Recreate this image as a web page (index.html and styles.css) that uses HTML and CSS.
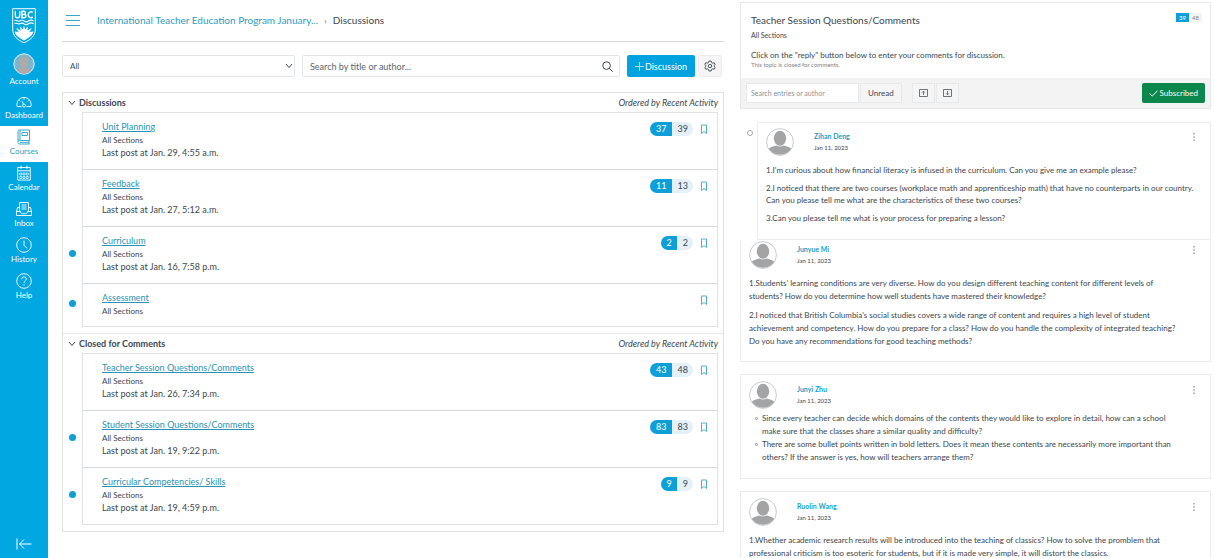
FILE: index.html
```html
<!DOCTYPE html>
<html lang="en">
<head>
    <meta charset="UTF-8">
    <meta name="viewport" content="width=device-width, initial-scale=1.0">
    <title>Discussions</title>
    <link rel="stylesheet" href="styles.css">
</head>
<body>
    <svg class="defs" aria-hidden="true">
        <symbol id="person" viewBox="0 0 28 28">
            <circle cx="14" cy="14" r="13.4" fill="#fff" stroke="#c9cbcc"/>
            <path d="M2.800 20.800c1.600-2.200 5-2.600 7.800-3.400 2.200 1.300 4.600 1.300 6.800 0 2.800.8 6.200 1.200 7.800 3.400-4.600 7.800-17.800 7.800-22.400 0z" fill="#a3a4a5"/>
            <ellipse cx="14" cy="10.200" rx="6.200" ry="7.500" fill="#a3a4a5"/>
        </symbol>
        <symbol id="bookmark" viewBox="0 0 8 11">
            <path d="M1.500 1h5v8.500l-2.500-2-2.500 2z" fill="none" stroke="#4fb3c4"/>
        </symbol>
        <symbol id="chevron" viewBox="0 0 8 6">
            <path d="M1 1l3 3.500L7 1" fill="none" stroke="#3b464f"/>
        </symbol>
        <symbol id="dots" viewBox="0 0 4 10">
            <path d="M1.200 1h1.600v1.600H1.200zM1.200 4.200h1.600v1.600H1.200zM1.200 7.400h1.600V9H1.200z" fill="#a0a6ab"/>
        </symbol>
    </svg>

    <div class="layout">
        <nav class="sidebar" aria-label="Global">
            <a href="#" class="logo" aria-label="UBC">
                <svg width="24" height="36" viewBox="0 0 24 36" fill="none" stroke="#fff">
                    <path d="M.7.7h22.600v20.500c0 6.500-4.300 10.500-11.300 13.600C5 31.700.7 27.700.7 21.200z"/>
                    <path d="M3.300 3.300v4.200c0 3 4.400 3 4.400 0V3.300M10 3.300v6.500h2c2.600 0 2.600-3.300.3-3.300H10h1.800c2.300 0 2.200-3.200-.2-3.200zM20.800 4.300c-4.700-2.500-6.500 5.200-1.900 5.500.8 0 1.300-.2 1.900-.6" stroke-width="1.400"/>
                    <path d="M2.500 12.800c2-1.500 3 1.200 5 .2s3-1.300 4.500 0 3 1 4.500 0 3-1.500 5 0M2.500 15.600c2-1.500 3 1.200 5 .2s3-1.300 4.500 0 3 1 4.500 0 3-1.500 5 0" stroke-width="1.100"/>
                    <path d="M12 17.500l1.200 4 2.600-3.300-.3 4.200 4.400-2.600-2.500 4.200 4-.4c-.8 4-4.500 6.500-9.400 9-4.900-2.500-8.600-5-9.400-9l4 .4-2.500-4.200 4.400 2.600-.3-4.200 2.600 3.300z" fill="#fff" stroke="none"/>
                </svg>
            </a>
            <a href="#" class="nav-item nav-account">
                <svg width="22" height="22" viewBox="0 0 22 22"><circle cx="11" cy="11" r="10.200" fill="#7fb4c9" stroke="#d9f1fa"/><path d="M4 17.500c1.500-2 3.500-1.800 5-2.800-3.200-3-2.700-11 2-11s5.200 8 2 11c1.500 1 3.500.8 5 2.800-3.500 4.200-10.500 4.200-14 0z" fill="#b0a9a5"/></svg>
                <span>Account</span>
            </a>
            <a href="#" class="nav-item">
                <svg width="16" height="16" viewBox="0 0 16 16" fill="none" stroke="#fff" stroke-width=".9"><path d="M5.500 13.500H1C.2 8.500 3.200 4.500 8 4.500s7.800 4 7 9h-4.500M8 4.500v2M3.200 7l1.200 1.200M12.800 7l-1.200 1.200M6.200 8.200l1.300 3.200"/><circle cx="8" cy="12.600" r="1.500"/></svg>
                <span>Dashboard</span>
            </a>
            <a href="#" class="nav-item active">
                <svg width="14" height="16" viewBox="0 0 14 16" fill="none" stroke="#25a0c6" stroke-width=".9"><path d="M12.500 11.500h-10c-1 0-1.500-.5-1.500-1.300V2.500C1 1.500 1.500 1 2.500 1h10zM1.100 10.500v3c0 1 .5 1.500 1.400 1.500h10M12 11.500V15M3 1v10M5 3.500h5.500v3H5zM3 13.300h9"/></svg>
                <span>Courses</span>
            </a>
            <a href="#" class="nav-item">
                <svg width="14" height="16" viewBox="0 0 14 16" fill="none" stroke="#fff" stroke-width=".9"><path d="M.7 2.500h12.600v12.600H.7zM.7 5.800h12.600M4 .5v3.500M10 .5v3.500"/><path d="M2.800 8h2v2h-2zM6 8h2v2H6zM9.200 8h2v2h-2zM2.800 11.500h2v2h-2zM6 11.500h2v2H6zM9.200 11.500h2v2h-2z" stroke-width=".7"/></svg>
                <span>Calendar</span>
            </a>
            <a href="#" class="nav-item">
                <svg width="16" height="16" viewBox="0 0 16 16" fill="none" stroke="#fff" stroke-width=".9"><path d="M3.500 10V1.500h9V10M5.500 4h5M5.500 6h5M5.500 8h5M3.500 6.500h-2l-1 4v4h15v-4l-1-4h-2M.5 10.500h4.200c0 2 1 2.200 3.300 2.200s3.300-.2 3.300-2.200h4.200"/></svg>
                <span>Inbox</span>
            </a>
            <a href="#" class="nav-item">
                <svg width="16" height="16" viewBox="0 0 16 16" fill="none" stroke="#fff" stroke-width=".9"><circle cx="8" cy="8" r="7.300"/><path d="M8 3.500V8.300l3 3"/></svg>
                <span>History</span>
            </a>
            <a href="#" class="nav-item">
                <svg width="16" height="16" viewBox="0 0 16 16" fill="none" stroke="#fff" stroke-width=".9"><circle cx="8" cy="8" r="7.300"/><path d="M5.700 6.200c0-3.200 4.600-3.200 4.600-.2 0 1.900-2.300 1.700-2.300 3.900M8 11v1.400"/></svg>
                <span>Help</span>
            </a>
            <button class="collapse" aria-label="Minimize navigation">
                <svg width="16" height="12" viewBox="0 0 16 12" fill="none" stroke="#fff"><path d="M1 .5v11M15.500 6H3.500M8 1.500L3.500 6 8 10.500"/></svg>
            </button>
        </nav>

        <main class="discussions">
            <header class="crumbs">
                <button class="menu" aria-label="Course menu">
                    <svg width="14" height="12" viewBox="0 0 14 12" stroke="#36a6cb"><path d="M0 1.500h14M0 6.500h14M0 11.500h14"/></svg>
                </button>
                <a href="#">International Teacher Education Program January...</a>
                <span class="sep">›</span>
                <span>Discussions</span>
            </header>

            <div class="filters">
                <div class="select-wrap">
                    <select class="field" aria-label="Filter"><option>All</option></select>
                    <svg width="8" height="6"><use href="#chevron"/></svg>
                </div>
                <div class="search-wrap">
                    <input class="field" type="text" aria-label="Search discussions" placeholder="Search by title or author...">
                    <svg width="11" height="11" viewBox="0 0 11 11" fill="none" stroke="#3b464f"><circle cx="4.600" cy="4.600" r="3.800"/><path d="M7.400 7.400l3.200 3.200"/></svg>
                </div>
                <button class="btn-add"><svg width="9" height="9" viewBox="0 0 9 9" stroke="#a9dff4"><path d="M4.500 0v9M0 4.500h9"/></svg>Discussion</button>
                <button class="btn-settings" aria-label="Settings">
                    <svg width="12" height="12" viewBox="0 0 12 12" fill="none" stroke="#3b464f" stroke-width=".9"><path d="M4.900 1h2.200l.4 1.600 1.200.6 1.500-.5 1 1.800L10 5.600v.8l1.200 1.100-1 1.800-1.500-.5-1.200.6L7.100 11H4.900l-.4-1.600-1.200-.6-1.500.5-1-1.800L2 6.400v-.8L.8 4.500l1-1.800 1.500.5 1.200-.6z"/><circle cx="6" cy="6" r="1.700"/></svg>
                </button>
            </div>

            <div class="board">
                <section class="group">
                    <div class="group-head">
                        <svg width="8" height="6"><use href="#chevron"/></svg>
                        <h2>Discussions</h2>
                        <em>Ordered by Recent Activity</em>
                    </div>
                    <ul class="topics">
                        <li class="topic">
                            <div class="topic-text">
                                <a href="#">Unit Planning</a>
                                <small>All Sections</small>
                                <p>Last post at Jan. 29, 4:55 a.m.</p>
                            </div>
                            <div class="pill"><b>37</b><span>39</span></div>
                            <svg class="mark" width="8" height="11"><use href="#bookmark"/></svg>
                        </li>
                        <li class="topic">
                            <div class="topic-text">
                                <a href="#">Feedback</a>
                                <small>All Sections</small>
                                <p>Last post at Jan. 27, 5:12 a.m.</p>
                            </div>
                            <div class="pill"><b>11</b><span>13</span></div>
                            <svg class="mark" width="8" height="11"><use href="#bookmark"/></svg>
                        </li>
                        <li class="topic unread">
                            <div class="topic-text">
                                <a href="#">Curriculum</a>
                                <small>All Sections</small>
                                <p>Last post at Jan. 16, 7:58 p.m.</p>
                            </div>
                            <div class="pill"><b>2</b><span>2</span></div>
                            <svg class="mark" width="8" height="11"><use href="#bookmark"/></svg>
                        </li>
                        <li class="topic unread">
                            <div class="topic-text">
                                <a href="#">Assessment</a>
                                <small>All Sections</small>
                            </div>
                            <svg class="mark" width="8" height="11"><use href="#bookmark"/></svg>
                        </li>
                    </ul>
                </section>
                <section class="group">
                    <div class="group-head">
                        <svg width="8" height="6"><use href="#chevron"/></svg>
                        <h2>Closed for Comments</h2>
                        <em>Ordered by Recent Activity</em>
                    </div>
                    <ul class="topics">
                        <li class="topic">
                            <div class="topic-text">
                                <a href="#">Teacher Session Questions/Comments</a>
                                <small>All Sections</small>
                                <p>Last post at Jan. 26, 7:34 p.m.</p>
                            </div>
                            <div class="pill"><b>43</b><span>48</span></div>
                            <svg class="mark" width="8" height="11"><use href="#bookmark"/></svg>
                        </li>
                        <li class="topic unread">
                            <div class="topic-text">
                                <a href="#">Student Session Questions/Comments</a>
                                <small>All Sections</small>
                                <p>Last post at Jan. 19, 9:22 p.m.</p>
                            </div>
                            <div class="pill"><b>83</b><span>83</span></div>
                            <svg class="mark" width="8" height="11"><use href="#bookmark"/></svg>
                        </li>
                        <li class="topic unread">
                            <div class="topic-text">
                                <a href="#">Curricular Competencies/ Skills</a>
                                <small>All Sections</small>
                                <p>Last post at Jan. 19, 4:59 p.m.</p>
                            </div>
                            <div class="pill"><b>9</b><span>9</span></div>
                            <svg class="mark" width="8" height="11"><use href="#bookmark"/></svg>
                        </li>
                    </ul>
                </section>
            </div>
        </main>

        <aside class="thread">
            <div class="thread-card">
                <div class="thread-intro">
                    <div class="thread-title">
                        <h1>Teacher Session Questions/Comments</h1>
                        <div class="count"><b>39</b><span>48</span></div>
                    </div>
                    <p class="sections">All Sections</p>
                    <p class="prompt">Click on the "reply" button below to enter your comments for discussion.</p>
                    <p class="closed">This topic is closed for comments.</p>
                </div>
                <div class="toolbar">
                    <input class="entry-search" type="text" aria-label="Search entries" placeholder="Search entries or author">
                    <button class="tool">Unread</button>
                    <div class="tool-pair">
                        <button class="tool tool-icon" aria-label="Collapse replies"><svg width="9" height="8" viewBox="0 0 9 8" fill="none" stroke="#4b555c" stroke-width=".8"><path d="M.5.5h8v7h-8zM4.500 6V2.200M3 3.700l1.500-1.500L6 3.700"/></svg></button>
                        <button class="tool tool-icon" aria-label="Expand replies"><svg width="9" height="8" viewBox="0 0 9 8" fill="none" stroke="#4b555c" stroke-width=".8"><path d="M.5.5h8v7h-8zM4.500 2v3.800M3 4.300l1.500 1.500L6 4.300"/></svg></button>
                    </div>
                    <button class="subscribed"><svg width="9" height="7" viewBox="0 0 9 7" fill="none" stroke="#fff"><path d="M.5 3.500L3.200 6 8.500.8"/></svg>Subscribed</button>
                </div>
            </div>

            <div class="first-entry">
                <span class="read-dot"></span>
                <article class="entry">
                    <div class="entry-head">
                        <svg width="28" height="28"><use href="#person"/></svg>
                        <div><a href="#">Zihan Deng</a><time>Jan 11, 2023</time></div>
                        <button class="more" aria-label="Options"><svg width="4" height="10"><use href="#dots"/></svg></button>
                    </div>
                    <p>1.I'm curious about how financial literacy is infused in the curriculum. Can you give me an example please?</p>
                    <p>2.I noticed that there are two courses (workplace math and apprenticeship math) that have no counterparts in our country. Can you please tell me what are the characteristics of these two courses?</p>
                    <p>3.Can you please tell me what is your process for preparing a lesson?</p>
                </article>
            </div>

            <article class="entry joined">
                <div class="entry-head">
                    <svg width="28" height="28"><use href="#person"/></svg>
                    <div><a href="#">Junyue Mi</a><time>Jan 11, 2023</time></div>
                    <button class="more" aria-label="Options"><svg width="4" height="10"><use href="#dots"/></svg></button>
                </div>
                <p>1.Students' learning conditions are very diverse. How do you design different teaching content for different levels of students? How do you determine how well students have mastered their knowledge?</p>
                <p>2.I noticed that British Columbia's social studies covers a wide range of content and requires a high level of student achievement and competency. How do you prepare for a class? How do you handle the complexity of integrated teaching? Do you have any recommendations for good teaching methods?</p>
            </article>

            <article class="entry">
                <div class="entry-head">
                    <svg width="28" height="28"><use href="#person"/></svg>
                    <div><a href="#">Junyi Zhu</a><time>Jan 11, 2023</time></div>
                    <button class="more" aria-label="Options"><svg width="4" height="10"><use href="#dots"/></svg></button>
                </div>
                <ul>
                    <li>Since every teacher can decide which domains of the contents they would like to explore in detail, how can a school make sure that the classes share a similar quality and difficulty?</li>
                    <li>There are some bullet points written in bold letters. Does it mean these contents are necessarily more important than others? If the answer is yes, how will teachers arrange them?</li>
                </ul>
            </article>

            <article class="entry">
                <div class="entry-head">
                    <svg width="28" height="28"><use href="#person"/></svg>
                    <div><a href="#">Ruolin Wang</a><time>Jan 11, 2023</time></div>
                    <button class="more" aria-label="Options"><svg width="4" height="10"><use href="#dots"/></svg></button>
                </div>
                <p>1.Whether academic research results will be introduced into the teaching of classics? How to solve the promblem that professional criticism is too esoteric for students, but if it is made very simple, it will distort the classics.</p>
            </article>
        </aside>
    </div>
</body>
</html>
```

FILE: styles.css
```css
* {
    margin: 0;
    padding: 0;
    box-sizing: border-box;
}

body {
    font-family: Lato, "Open Sans", sans-serif;
    font-size: 9px;
    color: #3b464f;
    background: #fff;
}

button,
input,
select {
    font: inherit;
    color: inherit;
    border: none;
    background: none;
}

button {
    cursor: pointer;
}

ul {
    list-style: none;
}

svg {
    display: block;
    flex-shrink: 0;
}

.defs {
    display: none;
}

.layout {
    display: grid;
    grid-template-columns: 48px minmax(0, 690fr) minmax(0, 476fr);
    height: 100vh;
    overflow: hidden;
}

/* Global navigation */
.sidebar {
    display: flex;
    flex-direction: column;
    background: #00a7e1;
}

.logo {
    display: flex;
    justify-content: center;
    padding-top: 8px;
}

.nav-item {
    display: flex;
    flex-direction: column;
    align-items: center;
    justify-content: flex-end;
    height: 36px;
    padding-bottom: 5px;
    color: #fff;
    font-size: 8px;
    line-height: 12px;
    text-decoration: none;
}

.nav-account {
    height: 46px;
    padding-bottom: 3px;
}

.nav-item.active {
    background: #fff;
    color: #25a0c6;
}

.collapse {
    margin-top: auto;
    padding: 8px 16px;
}

/* Discussion list */
.discussions {
    padding: 0 14px;
}

.crumbs {
    display: flex;
    align-items: center;
    height: 42px;
    padding-bottom: 2px;
    border-bottom: 1px solid #d5d8da;
    font-size: 10px;
}

.crumbs .menu {
    margin: 0 17px 0 4px;
}

.crumbs a {
    color: #2b9dc4;
    text-decoration: none;
}

.crumbs .sep {
    margin: 0 6px;
    color: #7b848b;
}

.filters {
    display: flex;
    gap: 7px;
    height: 22px;
    margin: 13px 2px 15px 0;
}

.select-wrap,
.search-wrap {
    display: flex;
    align-items: center;
    position: relative;
}

.select-wrap {
    flex: 233;
}

.search-wrap {
    flex: 318;
}

.select-wrap svg,
.search-wrap svg {
    position: absolute;
    right: 2px;
    pointer-events: none;
}

.search-wrap svg {
    right: 7px;
}

.field {
    width: 100%;
    height: 100%;
    padding: 0 7px;
    border: 1px solid #e3e6e8;
    border-radius: 2px;
    background: #fff;
    appearance: none;
}

.field::placeholder {
    color: #5d666d;
    opacity: 1;
}

.select-wrap .field {
    font-size: 8px;
}

.btn-add {
    display: flex;
    align-items: center;
    justify-content: center;
    gap: 1px;
    width: 68px;
    border-radius: 2px;
    background: #00a3df;
    color: #fff;
    font-size: 9px;
}

.btn-settings {
    display: flex;
    align-items: center;
    justify-content: center;
    width: 24px;
    margin-left: -4px;
    border: 1px solid #eceeef;
    border-radius: 2px;
    background: #f5f5f5;
}

.board {
    border: 1px solid #dfe2e4;
}

.group {
    padding: 0 5px 6px 19px;
}

.group + .group {
    border-top: 1px solid #e4e6e8;
}

.group-head {
    display: flex;
    align-items: center;
    gap: 3px;
    height: 19px;
    margin-left: -14px;
}

.group-head h2 {
    flex: 1;
    font-size: 9px;
    font-weight: 700;
}

.topics {
    border: 1px solid #e0e2e4;
}

.topic {
    display: flex;
    align-items: flex-start;
    position: relative;
    padding: 7px 9px 9px 19px;
}

.topic + .topic {
    border-top: 1px solid #d5d8da;
}

.topic.unread::before {
    content: "";
    position: absolute;
    left: -14px;
    top: 50%;
    width: 7px;
    height: 7px;
    margin-top: -5px;
    border-radius: 50%;
    background: #0e9fd3;
}

.topic-text {
    flex: 1;
}

.topic-text a {
    display: block;
    color: #2b92b5;
    line-height: 14px;
}

.topic-text small {
    display: block;
    font-size: 8px;
    line-height: 12px;
}

.topic-text p {
    line-height: 14px;
}

.pill {
    display: flex;
    overflow: hidden;
    margin: 2px 7px 0 0;
    border-radius: 7px;
    background: #e4f1f8;
    line-height: 14px;
}

.pill b,
.pill span {
    padding: 0 5px 0 6px;
    font-weight: 400;
}

.pill b {
    background: #0e9fd8;
    color: #fff;
}

.mark {
    margin-top: 4px;
}

/* Thread */
.thread {
    padding: 2px 3px 0 2px;
    overflow: hidden;
}

.thread-card {
    border: 1px solid #e6e8e9;
}

.thread-intro {
    padding: 10px 8px 9px 10px;
}

.thread-title {
    display: flex;
    justify-content: space-between;
    align-items: flex-start;
}

.thread-title h1 {
    font-size: 10px;
    font-weight: 400;
    line-height: 14px;
}

.count {
    display: flex;
    font-size: 6px;
    line-height: 9px;
    color: #80878c;
}

.count b,
.count span {
    padding: 0 3px;
    font-weight: 400;
    background: #f3f4f4;
}

.count b {
    background: #0e9fd8;
    color: #fff;
}

.sections {
    margin-top: 3px;
    font-size: 7px;
    line-height: 10px;
}

.prompt {
    margin-top: 9px;
    font-size: 8px;
    line-height: 12px;
}

.closed {
    font-size: 6px;
    line-height: 8px;
    color: #7b8288;
}

.toolbar {
    display: flex;
    align-items: center;
    padding: 5px;
    background: #f3f3f3;
    font-size: 8px;
}

.entry-search {
    width: 113px;
    height: 20px;
    padding: 0 4px;
    border: 1px solid #e6e8e9;
    background: #fff;
    font-size: 7px;
}

.entry-search::placeholder {
    color: #8b9298;
    opacity: 1;
}

.tool {
    height: 20px;
    margin-left: 1px;
    padding: 0 7px;
    border: 1px solid #e6e8e9;
    background: #f5f5f5;
}

.tool-icon {
    padding: 0 6px;
}

.tool-pair {
    display: flex;
    margin-left: 9px;
}

.subscribed {
    display: flex;
    align-items: center;
    gap: 2px;
    height: 20px;
    margin-left: auto;
    padding: 0 7px;
    border-radius: 2px;
    background: #0b874b;
    color: #fff;
}

.first-entry {
    display: flex;
    align-items: flex-start;
    margin-top: 13px;
}

.read-dot {
    width: 6px;
    height: 6px;
    margin: 8px 4px 0 7px;
    border: 1px solid #a5abb0;
    border-radius: 50%;
}

.entry {
    margin-top: 12px;
    padding: 6px 8px 12px;
    border: 1px solid #eaecee;
    font-size: 8px;
    line-height: 13px;
}

.first-entry .entry {
    flex: 1;
    margin-top: 0;
    padding: 5px 0 14px 8px;
    line-height: 12px;
}

.entry.joined {
    margin-top: 0;
    padding-top: 1px;
    border-top: none;
}

.entry-head {
    display: flex;
    align-items: flex-start;
    padding-bottom: 2px;
}

.first-entry .entry-head {
    padding-right: 8px;
}

.entry-head > div {
    flex: 1;
    margin-left: 20px;
    padding-top: 2px;
}

.entry-head a {
    display: block;
    color: #1a9fc9;
    font-size: 7px;
    font-weight: 700;
    line-height: 12px;
    text-decoration: none;
}

.entry-head time {
    display: block;
    font-size: 6px;
    line-height: 12px;
}

.more {
    margin-right: 2px;
    padding: 4px;
}

.entry p {
    margin-top: 6px;
    padding-right: 22px;
}

.first-entry .entry p {
    padding-right: 9px;
}

.entry ul {
    padding: 1px 17px 2px 6px;
}

.entry p:last-child {
    margin-bottom: 1px;
}

.entry li {
    display: flex;
    gap: 4px;
}

.entry li::before {
    content: "";
    box-sizing: border-box;
    flex-shrink: 0;
    width: 3px;
    height: 3px;
    margin-top: 5px;
    border: 1px solid #8b9298;
    border-radius: 50%;
}
```
